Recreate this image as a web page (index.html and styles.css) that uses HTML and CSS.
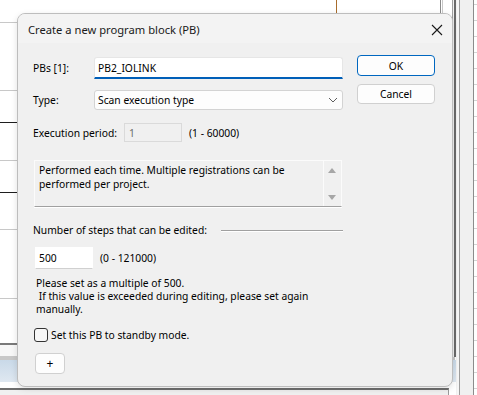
FILE: index.html
```html
<!DOCTYPE html>
<html lang="en">
<head>
    <meta charset="UTF-8">
    <meta name="viewport" content="width=device-width, initial-scale=1.0">
    <title>Create a new program block (PB)</title>
    <link rel="stylesheet" href="styles.css">
</head>
<body>

    <div class="desktop">
        <!-- Background application, partly hidden by the dialog -->
        <div class="bg-hline" style="top: 22px; width: 17px;"></div>
        <div class="bg-hline" style="top: 90px; width: 17px;"></div>
        <div class="bg-hline dark" style="top: 122px; width: 17px;"></div>
        <div class="bg-hline" style="top: 160px; width: 17px;"></div>
        <div class="bg-hline dark" style="top: 192px; width: 17px;"></div>
        <div class="bg-hline" style="top: 229px; width: 17px;"></div>
        <div class="bg-hline" style="top: 298px; width: 17px;"></div>
        <div class="bg-bottom-rule"></div>
        <div class="bg-band"></div>
        <div class="bg-footer"></div>
        <div class="bg-marker"></div>
        <div class="bg-vline-a"></div>
        <div class="bg-vline-b"></div>
        <div class="bg-vline-c"></div>
        <div class="bg-ruler"></div>

        <!-- Dialog -->
        <div class="dialog">
            <div class="titlebar">
                <span class="title">Create a new program block (PB)</span>
                <svg class="close" width="12" height="12" viewBox="0 0 12 12">
                    <path d="M1 1 L11 11 M11 1 L1 11" stroke="#1a1a1a" stroke-width="1.1" fill="none"/>
                </svg>
            </div>

            <div class="dialog-body">
                <div class="main">
                    <div class="field-row row-name">
                        <label class="label">PBs [1]:</label>
                        <div class="textbox focused">PB2_IOLINK</div>
                    </div>

                    <div class="field-row row-type">
                        <label class="label">Type:</label>
                        <div class="combo">
                            <span>Scan execution type</span>
                            <svg width="10" height="6" viewBox="0 0 10 6">
                                <path d="M1 1 L5 5 L9 1" stroke="#5f5f5f" stroke-width="1" fill="none"/>
                            </svg>
                        </div>
                    </div>

                    <div class="period-row">
                        <label class="label">Execution period:</label>
                        <div class="textbox disabled">1</div>
                        <span class="range">(1 - 60000)</span>
                    </div>

                    <div class="description">
                        <div class="description-text">Performed each time. Multiple registrations can be performed per project.</div>
                        <div class="scroll">
                            <span class="arrow up"></span>
                            <span class="arrow down"></span>
                        </div>
                    </div>

                    <div class="group-head">
                        <span>Number of steps that can be edited:</span>
                        <span class="group-line"></span>
                    </div>

                    <div class="steps-row">
                        <div class="textbox steps">500</div>
                        <span class="range">(0 - 121000)</span>
                    </div>

                    <p class="note">Please set as a multiple of 500.<br>&nbsp;If this value is exceeded during editing, please set again<br>manually.</p>

                    <div class="check-row">
                        <span class="checkbox"></span>
                        <span>Set this PB to standby mode.</span>
                    </div>

                    <button class="btn small">+</button>
                </div>

                <div class="actions">
                    <button class="btn primary">OK</button>
                    <button class="btn">Cancel</button>
                </div>
            </div>
        </div>
    </div>

</body>
</html>
```

FILE: styles.css
```css
body {
    margin: 0;
    font-family: 'Noto Sans', sans-serif;
    font-size: 10.3px;
    color: #000;
    background-color: #fff;
}

.desktop {
    position: relative;
    width: 477px;
    height: 395px;
    overflow: hidden;
    background-color: #fff;
}

/* background window pieces */
.bg-hline {
    position: absolute;
    left: 0;
    height: 1px;
    background-color: #c8c8c8;
}

.bg-hline.dark {
    background-color: #1e1e1e;
}

.bg-bottom-rule {
    position: absolute;
    left: 0;
    top: 343px;
    width: 455px;
    height: 2px;
    background-color: #7a7a7a;
    border-bottom: 11px solid #f7f7f7;
    box-shadow: 0 12px 0 #c8c8c8;
}

.bg-band {
    position: absolute;
    left: 0;
    top: 360px;
    width: 456px;
    height: 22px;
    background: linear-gradient(to bottom, #c9d9e8, #dfe8f1);
}

.bg-footer {
    position: absolute;
    left: 0;
    top: 388px;
    width: 448px;
    height: 7px;
    border-top: 2px solid #6e6e6e;
    border-right: 1px solid #9a9a9a;
    background-color: #f0f0f0;
}

.bg-marker {
    position: absolute;
    left: 336px;
    top: 0;
    width: 1px;
    height: 14px;
    background-color: #a86c2c;
}

.bg-vline-a {
    position: absolute;
    left: 440px;
    top: 0;
    width: 1px;
    height: 14px;
    border-left: 1px solid #8a8a8a;
    border-right: 1px solid #c8c8c8;
}

.bg-vline-b {
    position: absolute;
    left: 452px;
    top: 0;
    width: 1px;
    height: 357px;
    border-left: 1px solid #a0a0a0;
    border-right: 2px solid #6a6a6a;
    background-color: #f0f0f0;
}

.bg-vline-c {
    position: absolute;
    left: 456px;
    top: 0;
    width: 16px;
    height: 395px;
    border-left: 1px solid #f0f0f0;
    border-right: 1px solid #8c8c8c;
    background: linear-gradient(to right, #f6f6f6 2px, #9c9c9c 2px, #9c9c9c 3px, #f0f0f0 3px);
}

.bg-ruler {
    position: absolute;
    left: 474px;
    top: 4px;
    width: 3px;
    height: 391px;
    background: repeating-linear-gradient(to bottom, #d4d4d4 0, #d4d4d4 1px, transparent 1px, transparent 16px);
}

/* dialog window */
.dialog {
    position: absolute;
    left: 17px;
    top: 13px;
    width: 434px;
    height: 372px;
    border: 1px solid #bdbdbd;
    border-radius: 8px;
    background-color: #f0f0f0;
    overflow: hidden;
    box-shadow: 0 2px 6px rgba(0, 0, 0, 0.12);
}

.titlebar {
    height: 29px;
    background-color: #f3f3f3;
    display: flex;
    align-items: center;
    justify-content: space-between;
    padding: 0 8px 0 10px;
}

.title {
    color: #1a1a1a;
    font-size: 11.2px;
    margin-top: 1px;
}

.close {
    margin-top: 2px;
    margin-right: 1px;
}

.dialog-body {
    display: flex;
    padding: 12px 0 0 15px;
}

.main {
    width: 310px;
}

.actions {
    margin-left: 14px;
    display: flex;
    flex-direction: column;
    gap: 8px;
}

.label {
    display: block;
}

.field-row {
    display: grid;
    grid-template-columns: 61px 249px;
    align-items: center;
}

.row-name {
    margin-top: 2px;
    height: 22px;
}

.row-type {
    margin-top: 11px;
    height: 20px;
}

.textbox {
    box-sizing: border-box;
    background-color: #fff;
    border: 1px solid #e6e6e6;
    border-bottom-color: #b8b8b8;
    border-radius: 3px;
    padding-left: 3px;
    display: flex;
    align-items: center;
}

.textbox.focused {
    height: 22px;
    border-color: #e6e6e6;
    border-bottom: 2px solid #005fb8;
    border-radius: 3px 3px 0 0;
}

.combo {
    box-sizing: border-box;
    height: 20px;
    background-color: #fdfdfd;
    border: 1px solid #d3d3d3;
    border-radius: 3px;
    padding: 0 4px 0 3px;
    display: flex;
    align-items: center;
    justify-content: space-between;
}

.period-row {
    margin-top: 13px;
    display: flex;
    align-items: center;
}

.period-row .label {
    width: 91px;
}

.textbox.disabled {
    width: 58px;
    height: 19px;
    background-color: #f0f0f0;
    border: 1px solid #dadada;
    border-radius: 0;
    color: #6d6d6d;
    padding-left: 4px;
}

.range {
    margin-left: 7px;
}

.description {
    box-sizing: border-box;
    margin: 18px 0 0 1px;
    width: 308px;
    height: 47px;
    border: 1px solid #fbfbfb;
    border-bottom: 1px solid #a0a0a0;
    box-shadow: 0 1px 0 #fff;
    display: flex;
}

.description-text {
    flex: 1;
    padding: 2px 4px;
    line-height: 14px;
}

.scroll {
    width: 17px;
    border-left: 1px solid #fbfbfb;
    position: relative;
}

.arrow {
    position: absolute;
    left: 4px;
    width: 0;
    height: 0;
    border-left: 4px solid transparent;
    border-right: 4px solid transparent;
}

.arrow.up {
    top: 7px;
    border-bottom: 5px solid #a6a6a6;
}

.arrow.down {
    top: 34px;
    border-top: 5px solid #a6a6a6;
}

.group-head {
    margin-top: 15px;
    height: 16px;
    display: flex;
    align-items: center;
    gap: 14px;
}

.group-line {
    flex: 1;
    height: 1px;
    background-color: #a0a0a0;
    box-shadow: 0 1px 0 #fff;
    margin-top: 1px;
}

.steps-row {
    margin-top: 9px;
    display: flex;
    align-items: center;
}

.textbox.steps {
    width: 58px;
    height: 22px;
    margin-left: 2px;
    border-radius: 0;
    border-color: #fff;
    border-bottom-color: #d0d0d0;
}

.note {
    margin: 8px 0 0 3px;
    line-height: 13px;
}

.check-row {
    margin-top: 11px;
    display: flex;
    align-items: center;
    gap: 3px;
    height: 16px;
}

.checkbox {
    box-sizing: border-box;
    width: 14px;
    height: 14px;
    margin-left: 1px;
    border: 1px solid #333;
    border-radius: 3px;
    background-color: #f7f7f7;
}

.btn {
    box-sizing: border-box;
    width: 78px;
    height: 20px;
    font-family: inherit;
    font-size: 10.3px;
    color: #000;
    background-color: #fdfdfd;
    border: 1px solid #d0d0d0;
    border-radius: 4px;
    padding: 0;
}

.btn.primary {
    height: 21px;
    border-color: #0067c0;
}

.btn.small {
    display: block;
    width: 30px;
    height: 21px;
    margin: 10px 0 0 2px;
    font-size: 12px;
}
```
